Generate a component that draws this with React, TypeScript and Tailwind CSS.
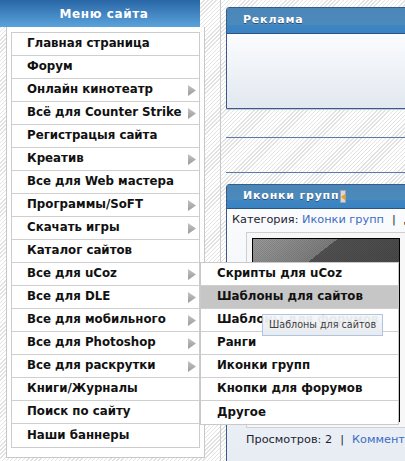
import React from "react";

const menu: { label: string; sub?: boolean }[] = [
  { label: "Главная страница" },
  { label: "Форум" },
  { label: "Онлайн кинотеатр", sub: true },
  { label: "Всё для Counter Strike", sub: true },
  { label: "Регистрацыя сайта" },
  { label: "Креатив", sub: true },
  { label: "Все для Web мастера" },
  { label: "Программы/SoFT", sub: true },
  { label: "Скачать игры", sub: true },
  { label: "Каталог сайтов" },
  { label: "Все для uCoz", sub: true },
  { label: "Все для DLE", sub: true },
  { label: "Все для мобильного", sub: true },
  { label: "Все для Photoshop", sub: true },
  { label: "Все для раскрутки", sub: true },
  { label: "Книги/Журналы" },
  { label: "Поиск по сайту" },
  { label: "Наши баннеры" },
];

const ucozSub = [
  "Скрипты для uCoz",
  "Шаблоны для сайтов",
  "Шаблоны для форумов",
  "Ранги",
  "Иконки групп",
  "Кнопки для форумов",
  "Другое",
];

function Arrow() {
  return (
    <svg width="8" height="11" viewBox="0 0 8 11">
      <defs>
        <linearGradient id="arr" x1="0" y1="0" x2="0" y2="1">
          <stop offset="0" stopColor="#c4c4c4" />
          <stop offset="1" stopColor="#9a9a9a" />
        </linearGradient>
      </defs>
      <polygon points="0,0 8,5.5 0,11" fill="url(#arr)" />
    </svg>
  );
}

function SubMenu() {
  return (
    <div className="absolute left-[188px] top-[-1px] z-20 w-[199px] border border-[#c9c9c9] bg-white">
      {ucozSub.map((s, i) => (
        <div
          key={s}
          className={
            "flex h-[23px] items-center pl-[16px] text-[11.8px] font-bold whitespace-nowrap text-[#111] " +
            (i < ucozSub.length - 1 ? "border-b border-[#cfcfcf] " : "h-[22px] ") +
            (i === 1 ? "bg-[#c6c6c6]" : "bg-white")
          }
        >
          {s}
        </div>
      ))}
      <div className="absolute left-[61px] top-[51px] flex h-[22px] w-[121px] items-center border border-[#a9c2de] bg-[linear-gradient(180deg,#f7f8fa,#e6eaef)] pl-[6px] text-[9.6px] font-normal whitespace-nowrap text-[#333] opacity-[0.94]">
        Шаблоны для сайтов
      </div>
    </div>
  );
}

function PanelHeader({ title, h, icon }: { title: string; h: string; icon?: boolean }) {
  return (
    <div
      className={
        h +
        " flex items-center border-b border-[#2f5380] bg-[linear-gradient(180deg,#4a86b8_0%,#4d8abc_66%,#3e86c3_66%,#3b83c0_100%)] pl-[16px]"
      }
    >
      <span className="text-[11px] font-bold tracking-[0.8px] text-white [text-shadow:0_1px_0_#2b4f78]">
        {title}
      </span>
      {icon && (
        <span className="ml-[1px] flex h-[13px] w-[6px] items-center justify-end border border-[#9aa3ad] bg-[#d4d8dc]">
          <svg width="4" height="6" viewBox="0 0 4 6">
            <polygon points="4,0 0,3 4,6" fill="#ff9a00" />
          </svg>
        </span>
      )}
    </div>
  );
}

export default function App() {
  return (
    <div className="flex h-[461px] w-[405px] overflow-hidden bg-[image:repeating-linear-gradient(135deg,#ffffff_0px,#ffffff_1.9px,#e2e2e2_1.9px,#e2e2e2_2.9px)] font-['DejaVu_Sans',sans-serif]">
      <aside className="flex w-[205px] shrink-0 flex-col">
        <div className="flex h-[27px] w-[200px] items-center justify-center bg-[linear-gradient(180deg,#2866a6,#5ba3db)] pl-[8px]">
          <span className="text-[12px] font-bold tracking-[0.6px] text-white">Меню сайта</span>
        </div>
        <div className="ml-[6px] w-[199px] border-x border-b border-[#c8c8c8] bg-white px-[4px] pt-[5px] pb-[9px]">
          <ul className="border border-[#cccccc]">
            {menu.map((m, i) => (
              <li
                key={m.label}
                className={
                  "relative flex h-[23px] items-center justify-between pr-[3px] pl-[15px] text-[11.8px] font-bold whitespace-nowrap text-[#111] " +
                  (i < menu.length - 1 ? "border-b border-[#cfcfcf]" : "h-[22px]")
                }
              >
                <span>{m.label}</span>
                {m.sub && <Arrow />}
                {m.label === "Все для uCoz" && <SubMenu />}
              </li>
            ))}
          </ul>
        </div>
      </aside>

      <div className="ml-[15px] flex shrink-0 flex-col border-l border-[#c8c8c8] pt-[7px] pl-[5px]">
        <section className="w-[260px] rounded-tl-[3px] border border-[#3a5b88] shadow-[0_1px_0_#c3cbd6]">
          <PanelHeader title="Реклама" h="h-[26px]" />
          <div className="h-[74px] bg-[linear-gradient(180deg,#fbfcfe,#e2e8f0)]" />
        </section>

        <div className="mt-[28px] h-[2px] w-[260px] border-t border-[#5b7aa5] bg-[#c9d5e5]" />
        <div className="mt-[34px] h-[2px] w-[260px] border-t border-[#5b7aa5] bg-[#c9d5e5]" />

        <section className="mt-[11px] w-[260px] rounded-tl-[3px] border border-[#3a5b88]">
          <PanelHeader title="Иконки групп" h="h-[24px]" icon />
          <div className="h-[300px] bg-[linear-gradient(180deg,#fafbfd,#e4eaf2)] pt-[4px] pl-[5px] text-[11.3px] whitespace-nowrap">
            <div className="flex h-[14px] items-center leading-[14px] text-[#1d1d33]">
              <span>Категория:&nbsp;</span>
              <span className="text-[#3b6cc6]">Иконки групп</span>
              <span className="mx-[8px]">|</span>
              <span>Добавил: admin</span>
            </div>
            <div className="mt-[5px] ml-[14px] w-[160px] border border-[#cfcfcf] bg-[#f7f7f7] p-[5px]">
              <div className="h-[184px] w-[148px] border border-black bg-[image:repeating-conic-gradient(#0000_0_25%,#0000001a_0_50%),linear-gradient(142deg,#9a9a9a_0px,#7d7d7d_52px,#515151_52px,#383838_233px)] bg-[length:2px_2px,100%_100%]" />
            </div>
            <div className="mt-[5px] ml-[14px] flex h-[14px] items-center leading-[14px] text-[#1d1d33]">
              <span>Просмотров: 2</span>
              <span className="mx-[8px]">|</span>
              <span className="text-[#3b6cc6]">Комментарии: 0</span>
            </div>
          </div>
        </section>
      </div>
    </div>
  );
}
